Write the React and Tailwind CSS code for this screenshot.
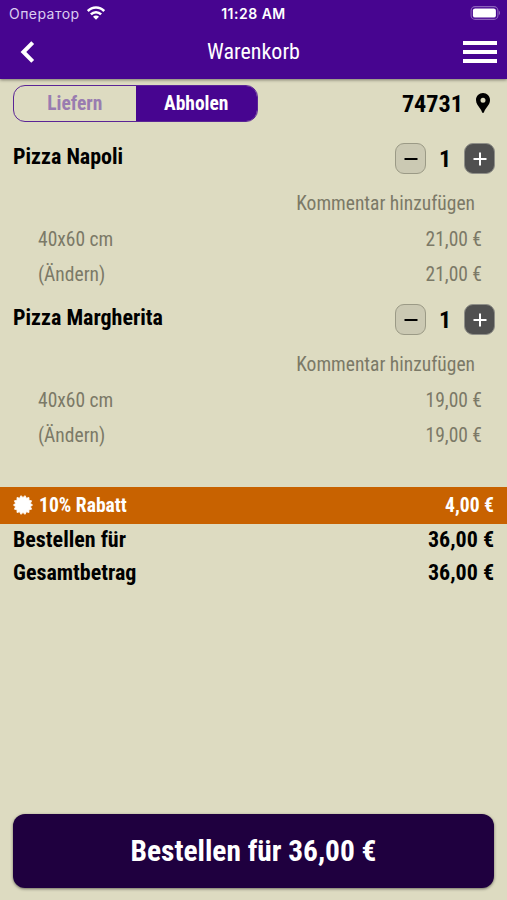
import { MdLocationPin } from "react-icons/md";
import clsx from "clsx";

const ITEMS = [
  { id: 1, name: "Pizza Napoli", count: 1, size: "40x60 cm", price: "21,00 €" },
  { id: 2, name: "Pizza Margherita", count: 1, size: "40x60 cm", price: "19,00 €" },
];

// 14-pointed seal used on the discount bar
const SEAL = Array.from({ length: 28 }, (_, i) => {
  const r = i % 2 ? 7.6 : 9.6;
  const a = ((i + 1) * Math.PI) / 14;
  return `${(10 + r * Math.sin(a)).toFixed(2)},${(10 - r * Math.cos(a)).toFixed(2)}`;
}).join(" ");

function StatusBar() {
  return (
    <div className="grid h-7 grid-cols-3 items-center pl-[9px] pr-[7px] font-['Inter',sans-serif] text-[14px] text-white">
      <div className="flex items-center gap-[7px]">
        <span className="-mt-[2px] tracking-[0.45px] text-[#dccdf0]">Оператор</span>
        <svg className="-mt-[2px]" width="18" height="14" viewBox="0 0 18 14" fill="none" stroke="white" strokeWidth="2.6">
          <path d="M0.8 5a11.3 11.3 0 0 1 16.4 0" />
          <path d="M3.9 8.4a7.2 7.2 0 0 1 10.2 0" />
          <path d="M9 13.8 6 10.8a4.2 4.2 0 0 1 6 0z" fill="white" stroke="none" />
        </svg>
      </div>
      <span className="-mt-[2px] pr-[2px] text-center font-semibold tracking-[0.5px]">11:28 AM</span>
      <svg className="-mt-[2px] justify-self-end" width="30" height="14" viewBox="0 0 30 14">
        <rect x="1.1" y="0.6" width="26.8" height="12.8" rx="4" fill="none" stroke="#8c62bb" strokeWidth="1.1" />
        <rect x="2.9" y="2.4" width="23" height="9.2" rx="2.2" fill="white" />
        <path d="M28.8 4.8c1.6.6 1.6 3.8 0 4.4z" fill="#8c62bb" />
      </svg>
    </div>
  );
}

function Header() {
  return (
    <header className="h-[79px] bg-[#470590] shadow-[0_1px_3px_rgba(0,0,0,0.45)]">
      <StatusBar />
      <div className="grid h-[47px] grid-cols-3 items-center px-[10px]">
        <svg className="ml-[10px]" width="15" height="22" viewBox="0 0 15 22" fill="none" stroke="white" strokeWidth="4">
          <path d="M12.7 1.6 3.4 11l9.3 9.4" />
        </svg>
        <h1 className="text-center text-[22px] text-white">Warenkorb</h1>
        <svg className="justify-self-end" width="34" height="24" viewBox="0 0 34 24" fill="white">
          <rect y="1" width="34" height="4" />
          <rect y="10" width="34" height="4" />
          <rect y="19" width="34" height="4" />
        </svg>
      </div>
    </header>
  );
}

function DeliveryToggle() {
  return (
    <div className="flex h-[37px] w-[245px] overflow-hidden rounded-xl border-[1.5px] border-[#5a2496] text-[19.5px] font-bold">
      <button className="flex-1 text-[#997cb0]">Liefern</button>
      <button className="flex-1 bg-[#470590] text-white">Abholen</button>
    </div>
  );
}

function StepButton({ plus }) {
  return (
    <button
      className={clsx(
        "flex size-[31px] items-center justify-center rounded-[9px] border",
        plus ? "border-[#8f8f88] bg-[#505050] text-white" : "border-[#9b9a86] bg-[#cbc9b3] text-black"
      )}
    >
      <svg width="14" height="14" viewBox="0 0 14 14" stroke="currentColor" strokeWidth="2">
        <path d="M0.5 7h13" />
        {plus && <path d="M7 0.5v13" />}
      </svg>
    </button>
  );
}

function CartItem({ item }) {
  return (
    <section className="h-[161px] text-[19.5px] text-[#7b7967]">
      <div className="flex h-[49px] justify-between pl-[13px] pr-3 text-black">
        <h2 className="pt-[6px] text-[22px] font-bold">{item.name}</h2>
        <div className="flex items-center">
          <StepButton />
          <span className="w-[38px] text-center text-[24px] font-bold">{item.count}</span>
          <StepButton plus />
        </div>
      </div>
      <div className="flex h-[39px] items-center justify-end pr-8 pt-[2px]">Kommentar hinzufügen</div>
      <div className="flex h-[35px] items-center justify-between pl-[38px] pr-[25px]">
        <span>{item.size}</span>
        <span>{item.price}</span>
      </div>
      <div className="flex h-[35px] items-center justify-between pl-[38px] pr-[25px]">
        <span>(Ändern)</span>
        <span>{item.price}</span>
      </div>
    </section>
  );
}

function TotalRow({ label, value }) {
  return (
    <div className="flex h-[33px] items-center justify-between px-[13px] pb-[2px] text-[22px] font-bold text-black">
      <span>{label}</span>
      <span>{value}</span>
    </div>
  );
}

export default function App() {
  return (
    <div className="flex h-[900px] w-full flex-col bg-[#dddbc1] font-['Roboto_Condensed','Roboto',sans-serif] [font-stretch:75%]">
      <Header />
      <div className="flex items-center justify-between pl-[13px] pr-3 pt-[6px]">
        <DeliveryToggle />
        <div className="flex items-center gap-2 text-[24.2px] font-bold text-black">
          <span className="pt-px">74731</span>
          <MdLocationPin className="-mt-[2px] size-[24px]" />
        </div>
      </div>
      <main className="pt-3">
        {ITEMS.map((item) => (
          <CartItem key={item.id} item={item} />
        ))}
      </main>
      <div className="mt-[31px] flex h-[37px] items-center bg-[#c86200] px-[13px] text-[19.6px] font-bold text-white">
        <svg className="-mt-[2px]" width="20" height="20" viewBox="0 0 20 20" fill="white" stroke="white" strokeWidth="0.8" strokeLinejoin="round">
          <polygon points={SEAL} />
        </svg>
        <span className="ml-[6px]">10% Rabatt</span>
        <span className="ml-auto">4,00 €</span>
      </div>
      <TotalRow label="Bestellen für" value="36,00 €" />
      <TotalRow label="Gesamtbetrag" value="36,00 €" />
      <div className="mt-auto px-[13px] pb-3">
        <button className="h-[74px] w-full rounded-xl bg-[#1f003f] text-[29.4px] font-bold text-white shadow-[0_1px_3px_rgba(0,0,0,0.5)]">
          Bestellen für 36,00 €
        </button>
      </div>
    </div>
  );
}
